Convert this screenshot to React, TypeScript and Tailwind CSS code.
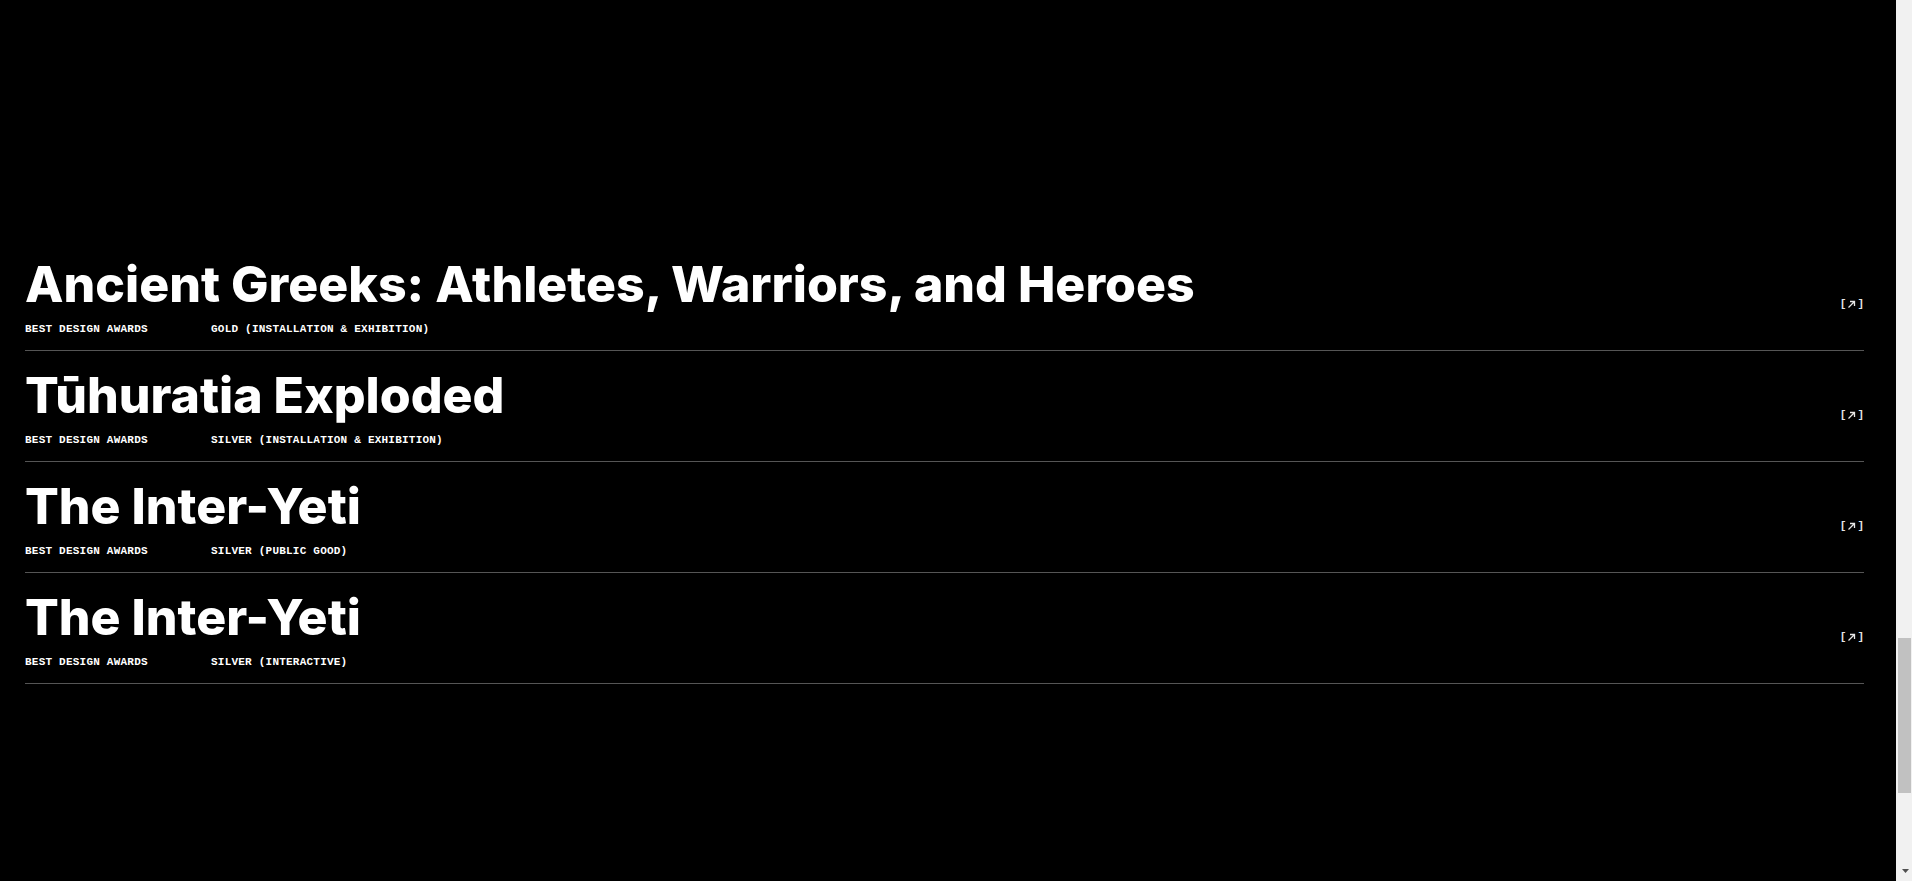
const awards = [
  {
    title: 'Ancient Greeks: Athletes, Warriors, and Heroes',
    org: 'Best Design Awards',
    prize: 'Gold (Installation & Exhibition)',
  },
  {
    title: 'Tūhuratia Exploded',
    org: 'Best Design Awards',
    prize: 'Silver (Installation & Exhibition)',
  },
  {
    title: 'The Inter-Yeti',
    org: 'Best Design Awards',
    prize: 'Silver (Public Good)',
  },
  {
    title: 'The Inter-Yeti',
    org: 'Best Design Awards',
    prize: 'Silver (Interactive)',
  },
];

function ExternalIcon() {
  return (
    <span className="inline-flex items-center text-[11px] leading-none font-bold text-[#e6e6e6] font-['Liberation_Mono',monospace]">
      [
      <svg width="9" height="9" viewBox="0 0 9 9" className="mx-[1px]" fill="none">
        <path d="M1.5 7.5L7.5 1.5M3 1.5H7.5V6" stroke="currentColor" strokeWidth="1.3" />
      </svg>
      ]
    </span>
  );
}

function Scrollbar() {
  return (
    <div className="flex w-[16px] shrink-0 flex-col items-center bg-[#f1f1f1] pt-[638px] pb-[8px]">
      <div className="ml-[2px] mr-[1px] h-[155px] w-[13px] bg-[#c1c1c1]" />
      <div className="flex-1" />
      <svg width="7" height="4" viewBox="0 0 7 4" className="ml-[3px]">
        <path d="M0 0H7L3.5 4Z" fill="#505050" />
      </svg>
    </div>
  );
}

export default function App() {
  return (
    <div className="flex h-screen overflow-hidden bg-black text-white">
      <main className="flex-1 pt-[240px] pl-[25px] pr-[32px]">
        {awards.map((a, i) => (
          <a
            key={i}
            href="#"
            className="flex items-start justify-between border-b border-[#555] pt-[20px] pb-[15px]"
          >
            <div>
              <h2 className="text-[50px] leading-[48px] font-extrabold tracking-normal font-['Inter',sans-serif]">
                {a.title}
              </h2>
              <div className="mt-4 flex text-[11px] leading-none font-bold uppercase tracking-[0.02em] font-['Liberation_Mono',monospace]">
                <span className="w-[186px]">{a.org}</span>
                <span>{a.prize}</span>
              </div>
            </div>
            <div className="mt-[29px]">
              <ExternalIcon />
            </div>
          </a>
        ))}
      </main>
      <Scrollbar />
    </div>
  );
}
